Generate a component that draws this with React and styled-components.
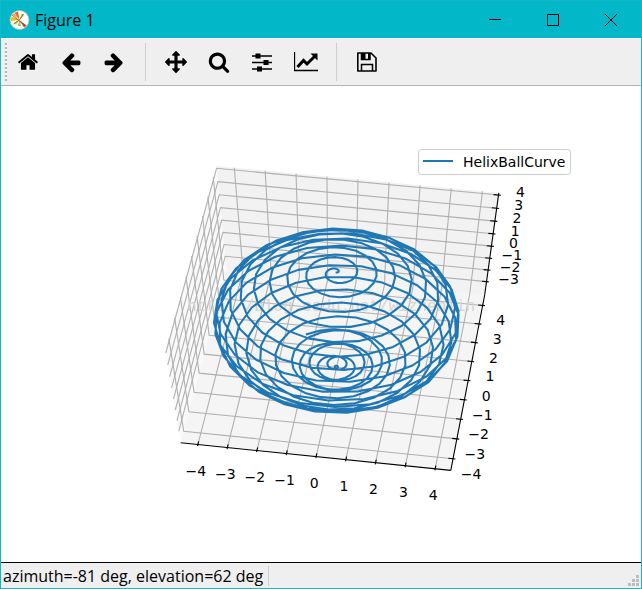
import React from "react"
import styled, { createGlobalStyle } from 'styled-components';

const GlobalStyle = createGlobalStyle`
* {
  box-sizing: border-box;
}

body {
  margin: 0;
  font-family: 'Open Sans', 'Noto Sans', sans-serif;
  color: #000;
}
`;

const Window = styled.div`
display: flex;
flex-direction: column;
min-height: 100vh;
border: 1px solid #17b8c6;
background: #fff;
`;

const TitleBar = styled.header`
display: flex;
align-items: center;
height: 37px;
padding: 0 1px 0 8px;
background: #02b7c7;
`;

const Title = styled.h1`
flex: 1;
margin: 0 0 0 5px;
font-size: 16px;
font-weight: 400;
line-height: 20px;
`;

const WindowButton = styled.button`
display: flex;
align-items: center;
justify-content: center;
width: 58px;
height: 36px;
padding: 0;
border: 0;
background: transparent;
`;

const ToolBar = styled.nav`
display: flex;
align-items: center;
height: 48px;
padding-left: 4px;
border-top: 1px solid #fff;
border-bottom: 1px solid #b5b5b5;
background: #efefef;
`;

const Handle = styled.div`
width: 2px;
height: 38px;
background: repeating-linear-gradient(#b4b4b4 0 2px, #f8f8f8 2px 4px);
`;

const ToolButton = styled.button`
display: flex;
align-items: center;
width: 43px;
height: 40px;
padding: 0 0 0 10px;
border: 0;
background: transparent;
`;

const Separator = styled.div`
width: 1px;
height: ${p => p.$tall || 38}px;
margin: 0 ${p => p.$gap}px;
background: #cfcfcf;
`;

const Figure = styled.main`
display: flex;
flex: 1;
min-height: 0;
`;

const Canvas = styled.svg`
display: block;
width: 100%;
height: auto;
font-family: 'DejaVu Sans', sans-serif;
font-size: 14px;
`;

const StatusBar = styled.footer`
display: flex;
align-items: center;
height: 26px;
padding-left: 2px;
border-top: 1px solid #000;
background: #efefef;
`;

const StatusText = styled.span`
font-size: 16px;
line-height: 20px;
white-space: nowrap;
`;

const Grip = styled.svg`
align-self: flex-end;
margin: 0 2px 2px auto;
`;

const ICONS = {
  home: 'M1472 992v480q0 26-19 45t-45 19h-384v-384h-256v384h-384q-26 0-45-19t-19-45v-480q0-1 .5-3t.5-3l575-474 575 474q1 2 1 6zm223-69l-62 74q-8 9-21 11h-3q-13 0-21-7l-692-577-692 577q-12 8-24 7-13-2-21-11l-62-74q-8-10-7-23.5t11-21.5l719-599q32-26 76-26t76 26l244 204v-195q0-14 9-23t23-9h192q14 0 23 9t9 23v408l219 182q10 8 11 21.5t-7 23.5z',
  back: 'M1664 896v128q0 53-32.5 90.5t-84.5 37.5h-704l293 294q38 36 38 90t-38 90l-75 76q-37 37-90 37-52 0-91-37l-651-652q-37-37-37-90 0-52 37-91l651-650q38-38 91-38 52 0 90 38l75 74q38 38 38 91t-38 91l-293 293h704q52 0 84.5 37.5t32.5 90.5z',
  forward: 'M1600 960q0 54-37 91l-651 651q-39 37-91 37-51 0-90-37l-75-75q-38-38-38-91t38-91l293-293h-704q-52 0-84.5-37.5t-32.5-90.5v-128q0-53 32.5-90.5t84.5-37.5h704l-293-294q-38-36-38-90t38-90l75-75q38-38 90-38 53 0 91 38l651 651q37 35 37 90z',
  pan: 'M1792 896q0 26-19 45l-256 256q-19 19-45 19t-45-19-19-45v-128h-384v384h128q26 0 45 19t19 45-19 45l-256 256q-19 19-45 19t-45-19l-256-256q-19-19-19-45t19-45 45-19h128v-384h-384v128q0 26-19 45t-45 19-45-19l-256-256q-19-19-19-45t19-45l256-256q19-19 45-19t45 19 19 45v128h384v-384h-128q-26 0-45-19t-19-45 19-45l256-256q19-19 45-19t45 19l256 256q19 19 19 45t-19 45-45 19h-128v384h384v-128q0-26 19-45t45-19 45 19l256 256q19 19 19 45z',
  zoom: 'M1216 832q0-185-131.5-316.5t-316.5-131.5-316.5 131.5-131.5 316.5 131.5 316.5 316.5 131.5 316.5-131.5 131.5-316.5zm512 832q0 52-38 90t-90 38q-54 0-90-38l-343-342q-179 124-399 124-143 0-273.5-55.5t-225-150-150-225-55.5-273.5 55.5-273.5 150-225 225-150 273.5-55.5 273.5 55.5 225 150 150 225 55.5 273.5q0 220-124 399l343 343q37 37 37 90z',
};

const Glyph = ({ name }) => (
  <svg width="22" height="22" viewBox="0 0 1792 1792"><path d={ICONS[name]}/></svg>
);

const Sliders = () => (
  <svg width="22" height="22" viewBox="0 0 22 22">
    <path d="M1 5h20M1 11.5h20M1 18h20" stroke="#000" strokeWidth="1.4"/>
    <path d="M4.500 2.500h5v5h-5zM12.500 9h5v5h-5zM6 15.500h5v5h-5z"/>
  </svg>
);

const Chart = () => (
  <svg width="24" height="22" viewBox="0 0 24 22">
    <path d="M.5 1v18.500h23.500" fill="none" stroke="#000" strokeWidth="1.300"/>
    <path d="M3.500 16l6-6.500 3.500 3.500 7.500-7.500" fill="none" stroke="#000" strokeWidth="3"/>
    <path d="M16.500 2.500h7v7z"/>
  </svg>
);

const Floppy = () => (
  <svg width="22" height="22" viewBox="0 0 22 22">
    <path d="M1.800 2h13.200l5 5v13h-18.200z" fill="none" stroke="#000" strokeWidth="1.600" strokeLinejoin="round"/>
    <path d="M5.500 2v6.500h8.500v-6.500M5.500 20v-6.500h11v6.500" fill="none" stroke="#000" strokeWidth="1.500"/>
    <path d="M5.500 2h4v6.500h-4zM12 2h2v6.500h-2z"/>
  </svg>
);

const Logo = () => (
  <svg width="21" height="20" viewBox="0 0 21 20">
    <circle cx="10.500" cy="10" r="9.500" fill="#fff" stroke="#b9b9a8" strokeWidth=".8"/>
    <path d="M10.500 10L5.500 3 9 1.500z" fill="#f0641e"/>
    <path d="M10.500 10L1.800 11 2.500 6.500z" fill="#f5b90f"/>
    <path d="M10.500 10L3.500 4.500 5 3.200z" fill="#e8a03c"/>
    <path d="M10.500 10L12.500 3.500 15.200 4.800z" fill="#9ccc65"/>
    <path d="M10.500 10L17.500 15.500 15 17.500z" fill="#d1491b"/>
    <path d="M10.500 10L9 16 12 16z" fill="#8bbf6a"/>
    <path d="M10.500 10L5 12.500 7 15z" fill="#e5d23c"/>
    <path d="M3 5l13.500 11M10.500 10l4-6M10.500 10l-6 4" stroke="#6e5530" strokeWidth=".8"/>
  </svg>
);

// camera
const AZIMUTH = -81.4 * Math.PI / 180;
const ELEVATION = 62 * Math.PI / 180;
const DISTANCE = 10;
const LIMITS = [[-4.4, 4.34], [-4.4, 4.4], [-3.99, 4]];
const PAD = 1 / 48;

const unit = (axis, value) => {
  const [min, max] = LIMITS[axis];
  return (value - min) / (max - min) - 0.5;
};

// cube coordinates (-0.5 to 0.5) to canvas pixels
const project = ([x, y, z]) => {
  const ca = Math.cos(AZIMUTH), sa = Math.sin(AZIMUTH);
  const ce = Math.cos(ELEVATION), se = Math.sin(ELEVATION);
  const right = -sa * x + ca * y;
  const up = -se * ca * x - se * sa * y + ce * z;
  const depth = DISTANCE - (ce * ca * x + ce * sa * y + se * z);
  return [334.7 + 2681 * right / depth, 235 - 1981 * up / depth];
};

const path = points => 'M' + points.map(p => project(p).map(n => n.toFixed(2)).join(' ')).join('L');

const LO = -0.5 - PAD;
const HI = 0.5 + PAD;

const PANES = [
  { fill: '#f9f9f9', d: path([[LO, LO, LO], [LO, HI, LO], [LO, HI, HI], [LO, LO, HI]]) },
  { fill: '#f2f2f2', d: path([[LO, HI, LO], [HI, HI, LO], [HI, HI, HI], [LO, HI, HI]]) },
  { fill: '#f5f5f5', d: path([[LO, LO, LO], [HI, LO, LO], [HI, HI, LO], [LO, HI, LO]]) },
];

const range = (from, to) => Array.from({ length: to - from + 1 }, (_, i) => from + i);

const AXES = [
  {
    values: range(-4, 4),
    line: path([[LO, LO, LO], [HI, LO, LO]]),
    grid: v => path([[v, LO, LO], [v, HI, LO], [v, HI, HI]]),
    tick: v => [[v, LO - 0.009, LO], [v, LO + 0.018, LO]],
    edge: v => [v, LO, LO],
    offset: [-2, 26],
  },
  {
    values: range(-4, 4),
    line: path([[HI, LO, LO], [HI, HI, LO]]),
    grid: v => path([[HI, v, LO], [LO, v, LO], [LO, v, HI]]),
    tick: v => [[HI + 0.009, v, LO], [HI - 0.018, v, LO]],
    edge: v => [HI, v, LO],
    offset: [18, 15],
  },
  {
    values: range(-3, 4),
    line: path([[HI, HI, LO], [HI, HI, HI]]),
    grid: v => path([[LO, LO, v], [LO, HI, v], [HI, HI, v]]),
    tick: v => [[HI + 0.009, HI, v], [HI - 0.018, HI, v]],
    edge: v => [HI, HI, v],
    offset: [22, -3],
  },
];

const helix = () => {
  const points = [];
  for (let i = 0; i < 500; i++) {
    const t = i / 500;
    const theta = 3.6 * t;
    const phi = 144 * t;
    points.push([
      unit(0, 4 * Math.sin(theta) * Math.cos(phi)),
      unit(1, 4 * Math.sin(theta) * Math.sin(phi)),
      unit(2, 4 * Math.cos(theta)),
    ]);
  }
  return path(points);
};

const TickLabel = ({ value, position, offset }) => {
  const [x, y] = project(position);
  return (
    <text x={x + offset[0]} y={y + offset[1] + 5} textAnchor="middle">{String(value).replace('-', '\u2212')}</text>
  );
};

const Plot = () => (
  <Canvas viewBox="0 0 640 476" role="img" aria-label="HelixBallCurve">
    {PANES.map(p => <path key={p.fill} d={p.d + 'Z'} fill={p.fill}/>)}
    {AXES.map((axis, i) => (
      <g key={i} fill="none">
        {axis.values.map(v => <path key={v} d={axis.grid(unit(i, v))} stroke="#b0b0b0" strokeWidth="1.100"/>)}
      </g>
    ))}
    {AXES.map((axis, i) => (
      <g key={i}>
        <path d={axis.line} stroke="#000" strokeWidth="1.100"/>
        {axis.values.map(v => <path key={v} d={path(axis.tick(unit(i, v)))} stroke="#000" strokeWidth="1.100"/>)}
        {axis.values.map(v => <TickLabel key={v} value={v} position={axis.edge(unit(i, v))} offset={axis.offset}/>)}
      </g>
    ))}
    <text x="186" y="225" fill="#d4d4d0" fontFamily="Liberation Mono, monospace" fontSize="16">http://blog.csdn.net/wizhenlin</text>
    <path d={helix()} fill="none" stroke="#1f77b4" strokeWidth="2.080" strokeLinejoin="round" strokeLinecap="square"/>
    <rect x="417.500" y="63.500" width="152" height="25" rx="3" fill="#fff" stroke="#ccc"/>
    <path d="M423 75h28" stroke="#1f77b4" strokeWidth="2" strokeLinecap="square"/>
    <text x="462" y="81">HelixBallCurve</text>
  </Canvas>
);

class App extends React.Component {
  render() {
    return (
      <Window>
        <GlobalStyle/>
        <TitleBar>
          <Logo/>
          <Title>Figure 1</Title>
          <WindowButton aria-label="Minimize">
            <svg width="12" height="12"><path d="M0 5.500h12" stroke="#000"/></svg>
          </WindowButton>
          <WindowButton aria-label="Maximize">
            <svg width="12" height="12"><path d="M.5.5h11v11h-11z" fill="none" stroke="#000"/></svg>
          </WindowButton>
          <WindowButton aria-label="Close">
            <svg width="12" height="12"><path d="M0 0l12 12M12 0L0 12" stroke="#000"/></svg>
          </WindowButton>
        </TitleBar>
        <ToolBar>
          <Handle/>
          <ToolButton aria-label="Home"><Glyph name="home"/></ToolButton>
          <ToolButton aria-label="Back"><Glyph name="back"/></ToolButton>
          <ToolButton aria-label="Forward"><Glyph name="forward"/></ToolButton>
          <Separator $gap={9}/>
          <ToolButton aria-label="Pan"><Glyph name="pan"/></ToolButton>
          <ToolButton aria-label="Zoom"><Glyph name="zoom"/></ToolButton>
          <ToolButton aria-label="Configure subplots"><Sliders/></ToolButton>
          <ToolButton aria-label="Edit axes"><Chart/></ToolButton>
          <Separator $gap={9}/>
          <ToolButton aria-label="Save"><Floppy/></ToolButton>
        </ToolBar>
        <Figure>
          <Plot/>
        </Figure>
        <StatusBar>
          <StatusText>azimuth=-81 deg, elevation=62 deg</StatusText>
          <Separator $gap={5} $tall={20}/>
          <Grip width="11" height="11" fill="#bdbdbd">
            <path d="M8 0h3v3h-3zM4 4h3v3h-3zM8 4h3v3h-3zM0 8h3v3h-3zM4 8h3v3h-3zM8 8h3v3h-3z"/>
          </Grip>
        </StatusBar>
      </Window>
    );
  }
}

export default App
